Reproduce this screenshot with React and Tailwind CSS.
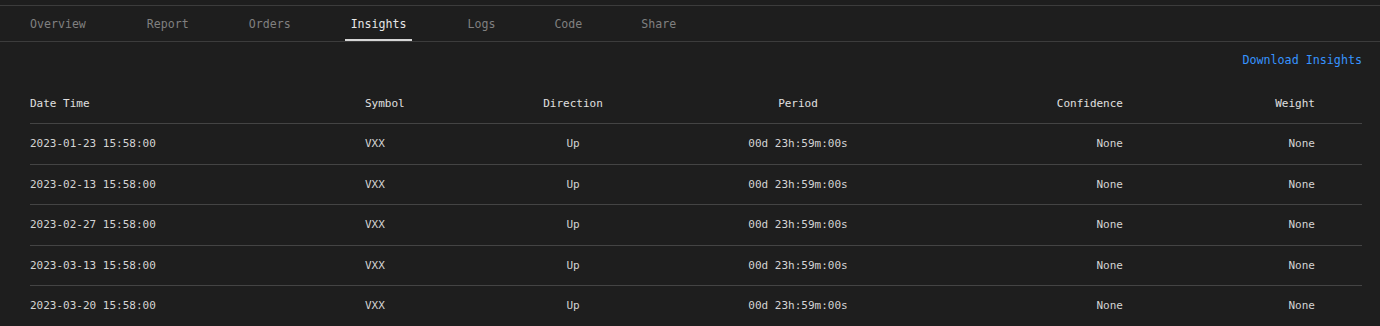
import React from 'react';

const tabs = [
    { label: 'Overview', shift: '' },
    { label: 'Report', shift: 'ml-[2px]' },
    { label: 'Orders', shift: 'ml-[1px]' },
    { label: 'Insights', shift: 'ml-[1px]' },
    { label: 'Logs', shift: 'ml-[2px]' },
    { label: 'Code', shift: '' },
    { label: 'Share', shift: '' },
];

const rows = [
    '2023-01-23 15:58:00',
    '2023-02-13 15:58:00',
    '2023-02-27 15:58:00',
    '2023-03-13 15:58:00',
    '2023-03-20 15:58:00',
];

// column template shared by header and rows
const gridCols = "grid grid-cols-[335px_135px_146px_304px_173px_192px_47px]";

const App = () => {
    return (
        <div className="h-[326px] w-full overflow-hidden bg-[#1e1e1e] pt-[5px] text-[11px] leading-[16px] text-[#d4d4d4] [font-family:'DejaVu_Sans_Mono',monospace]">
            <div className="border-t border-[#3c3c3c]">
                <nav className="flex h-[36px] gap-[47px] border-b border-[#3c3c3c] pl-[24px] text-[11.6px]">
                    {tabs.map(({ label, shift }) => (
                        <button
                            key={label}
                            className={
                                label === 'Insights'
                                    ? `${shift} flex h-[35px] items-center border-b-2 border-[#d6d6d6] px-[6px] pt-[2px] text-[#e6e6e6]`
                                    : `${shift} flex h-[35px] items-center border-b-2 border-transparent px-[6px] pt-[2px] text-[#808080]`
                            }
                        >
                            {label}
                        </button>
                    ))}
                </nav>
            </div>

            <div className="flex justify-end pr-[18px] pt-[10px]">
                <a className="cursor-pointer text-[11.7px] text-[#3794ff]">Download Insights</a>
            </div>

            <div className="ml-[30px] mr-[18px]">
                <div className={`${gridCols} border-b border-[#444444] pt-[28px] pb-[11px] text-[#e0e0e0]`}>
                    <div>Date Time</div>
                    <div>Symbol</div>
                    <div className="text-center">Direction</div>
                    <div className="text-center">Period</div>
                    <div className="text-right">Confidence</div>
                    <div className="text-right">Weight</div>
                    <div />
                </div>
                {rows.map((date) => (
                    <div key={date} className={`${gridCols} h-[40.5px] items-center border-b border-[#444444] pt-[1px]`}>
                        <div>{date}</div>
                        <div>VXX</div>
                        <div className="text-center">Up</div>
                        <div className="text-center">00d 23h:59m:00s</div>
                        <div className="text-right">None</div>
                        <div className="text-right">None</div>
                        <div />
                    </div>
                ))}
            </div>
        </div>
    );
};

export default App;
